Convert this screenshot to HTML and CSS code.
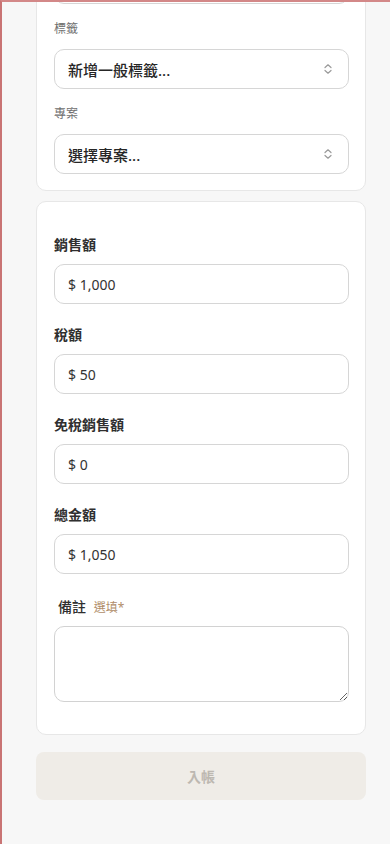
FILE: index.html
```html
<!DOCTYPE html>
<html lang="zh-Hant">
<head>
<meta charset="utf-8">
<meta name="viewport" content="width=device-width, initial-scale=1">
<title>入帳</title>
<link rel="stylesheet" href="styles.css">
</head>
<body>
<div class="frame">
  <div class="page">
    <section class="card card-top">
      <div class="sfield">
        <div class="slabel"></div>
        <div class="select"></div>
      </div>
      <div class="sfield">
        <div class="slabel">標籤</div>
        <div class="select">
          <span>新增一般標籤...</span>
          <svg class="chev" width="14" height="14" viewBox="0 0 14 14"><path d="M4 5.5 7 2.8 10 5.5M4 8.5 7 11.2 10 8.5" fill="none" stroke="#9a9a9a" stroke-width="1.2" stroke-linecap="round" stroke-linejoin="round"/></svg>
        </div>
      </div>
      <div class="sfield">
        <div class="slabel">專案</div>
        <div class="select">
          <span>選擇專案...</span>
          <svg class="chev" width="14" height="14" viewBox="0 0 14 14"><path d="M4 5.5 7 2.8 10 5.5M4 8.5 7 11.2 10 8.5" fill="none" stroke="#9a9a9a" stroke-width="1.2" stroke-linecap="round" stroke-linejoin="round"/></svg>
        </div>
      </div>
    </section>

    <section class="card card-amounts">
      <div class="field">
        <div class="label">銷售額</div>
        <div class="input">$ 1,000</div>
      </div>
      <div class="field">
        <div class="label">稅額</div>
        <div class="input">$ 50</div>
      </div>
      <div class="field">
        <div class="label">免稅銷售額</div>
        <div class="input">$ 0</div>
      </div>
      <div class="field">
        <div class="label">總金額</div>
        <div class="input">$ 1,050</div>
      </div>
      <div class="field field-note">
        <div class="label label-note">備註 <span class="opt">選填*</span></div>
        <textarea class="textarea"></textarea>
      </div>
    </section>

    <button class="submit" type="button">入帳</button>
  </div>
</div>
</body>
</html>
```
FILE: styles.css
```css
* { box-sizing: border-box; }
html, body {
  margin: 0;
  padding: 0;
  height: 100%;
}
body {
  background: #f7f7f7;
  font-family: "Noto Sans", "Noto Sans CJK TC", sans-serif;
  color: #2b2b2b;
  overflow: hidden;
}
.frame {
  height: 844px;
  border-top: 2px solid #d38888;
  border-left: 2px solid #c97474;
  overflow: hidden;
  background: #f7f7f7;
}
.page {
  margin-top: -84px;
  padding: 0 24px 0 34px;
  display: flex;
  flex-direction: column;
  gap: 10px;
}
.card {
  background: #fff;
  border: 1px solid #e7e7e7;
  border-radius: 10px;
  padding: 0 16px 0 17px;
}
.card-top {
  padding-top: 16px;
  padding-bottom: 16px;
  display: flex;
  flex-direction: column;
  gap: 16px;
}
.sfield {
  display: flex;
  flex-direction: column;
  gap: 11px;
}
.slabel {
  height: 18px;
  font-size: 12px;
  line-height: 18px;
  color: #6f6f6f;
}
.select {
  height: 40px;
  border: 1px solid #d6d6d6;
  border-radius: 10px;
  padding: 0 12px 0 13px;
  display: flex;
  align-items: center;
  justify-content: space-between;
  font-size: 15px;
  font-weight: 500;
  color: #262626;
}
.chev { display: block; margin-right: 1px; }
.card-amounts {
  padding-top: 33px;
  padding-bottom: 32px;
  display: flex;
  flex-direction: column;
  gap: 21px;
}
.field {
  display: flex;
  flex-direction: column;
  gap: 9px;
}
.label {
  font-size: 14px;
  line-height: 20px;
  font-weight: 700;
  color: #2f2f2f;
}
.input {
  height: 40px;
  border: 1px solid #d6d6d6;
  border-radius: 10px;
  padding: 0 13px;
  display: flex;
  align-items: center;
  font-size: 14px;
  color: #333;
}
.field-note { gap: 8px; margin-top: 2px; }
.label-note {
  padding-left: 4px;
  font-weight: 500;
  font-size: 14px;
}
.opt {
  margin-left: 4px;
  font-size: 12px;
  font-weight: 400;
  color: #b08d69;
}
.textarea {
  display: block;
  width: 100%;
  height: 76px;
  border: 1px solid #d2d2d2;
  border-radius: 10px;
  resize: vertical;
  font-family: inherit;
  background: #fff;
  outline: none;
}
.submit {
  margin-top: 7px;
  height: 48px;
  border: none;
  border-radius: 8px;
  background: #efece7;
  color: #bdb8b1;
  font-family: inherit;
  font-size: 14px;
  font-weight: 700;
}
```
